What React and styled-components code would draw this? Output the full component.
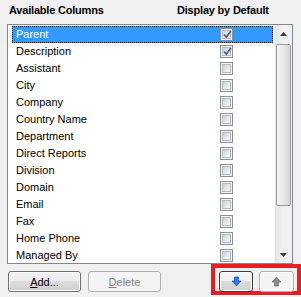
import React from "react";
import styled, { createGlobalStyle } from "styled-components";

const GlobalStyle = createGlobalStyle`
  html, body {
    margin: 0;
    padding: 0;
    background: #f0f0f0;
  }
  body {
    font-family: Tahoma, "Liberation Sans", Arial, sans-serif;
    font-size: 11px;
    color: #000;
  }
`;

const Page = styled.div`
  width: 301px;
  height: 297px;
  overflow: hidden;
  display: flex;
  flex-direction: column;
`;

const HeaderRow = styled.div`
  height: 24px;
  display: grid;
  grid-template-columns: 168px 1fr;
  align-items: center;
  padding-left: 9px;
  font-weight: bold;
  font-size: 11px;
  letter-spacing: -0.2px;
  box-sizing: border-box;
  padding-bottom: 4px;
`;

const ListBox = styled.div`
  margin-left: 7px;
  width: 286px;
  height: 240px;
  box-sizing: border-box;
  border: 1px solid #828790;
  background: #fff;
  display: flex;
`;

const Rows = styled.div`
  flex: 1;
  padding: 1px 1px 0 4px;
  overflow: hidden;
`;

const Row = styled.div`
  height: 17px;
  display: grid;
  grid-template-columns: 208px 13px 1fr;
  align-items: center;
  box-sizing: border-box;
  padding-left: 4px;
  background: ${(p) => (p.$selected ? "#3399ff" : "transparent")};
  color: ${(p) => (p.$selected ? "#fff" : "#000")};
  outline: ${(p) => (p.$selected ? "1px dotted #000" : "none")};
  outline-offset: -1px;
`;

const Label = styled.span`
  white-space: nowrap;
  line-height: 17px;
`;

const Check = styled.span`
  width: 13px;
  height: 13px;
  box-sizing: border-box;
  border: 1px solid #8e8f8f;
  background: #f4f4f4;
  display: flex;
  align-items: center;
  justify-content: center;
  margin-left: -4px;

  &::before {
    content: "";
    position: absolute;
  }
`;

const CheckInner = styled.span`
  width: 9px;
  height: 9px;
  box-sizing: border-box;
  background: linear-gradient(135deg, #cbcfd5 0%, #e6e8eb 55%, #f7f7f7 100%);
  border: 1px solid #b7bcc2;
  display: flex;
  align-items: center;
  justify-content: center;
  position: relative;

  svg {
    position: absolute;
    left: -1px;
    top: -2px;
  }
`;

const ScrollBar = styled.div`
  width: 17px;
  display: flex;
  flex-direction: column;
  background: linear-gradient(90deg, #e3e3e3 0%, #f0f0f0 40%, #f0f0f0 100%);
  border-left: 1px solid #fff;
`;

const ScrollArrow = styled.div`
  height: 17px;
  display: flex;
  align-items: center;
  justify-content: center;
`;

const Thumb = styled.div`
  margin: 2px 1px 0 1px;
  height: 162px;
  box-sizing: border-box;
  border: 1px solid #9a9a9a;
  border-radius: 2px;
  background: linear-gradient(90deg, #f3f3f3 0%, #e8e8e8 50%, #d6d6d6 100%);
`;

const Track = styled.div`
  flex: 1;
`;

const BottomBar = styled.div`
  display: flex;
  align-items: flex-start;
  padding-left: 8px;
`;

const Button = styled.button`
  margin-top: 7px;
  width: ${(p) => p.$w || 73}px;
  height: 21px;
  box-sizing: border-box;
  border-radius: 3px;
  padding: 0;
  font-family: Tahoma, "Liberation Sans", Arial, sans-serif;
  font-size: 11px;
  border: 1px solid ${(p) => (p.disabled ? "#adb2b5" : "#707070")};
  color: ${(p) => (p.disabled ? "#838383" : "#000")};
  background: ${(p) =>
    p.disabled
      ? "#f4f4f4"
      : "linear-gradient(180deg, #f2f2f2 0%, #ebebeb 50%, #dddddd 50%, #cfcfcf 100%)"};
  box-shadow: inset 0 0 0 1px ${(p) => (p.disabled ? "#f4f4f4" : "#fcfcfc")};
  margin-left: ${(p) => p.$ml || 0}px;
  display: flex;
  align-items: center;
  justify-content: center;

  u {
    text-decoration: underline;
  }
`;

const HighlightGroup = styled.div`
  margin-left: auto;
  border: 4px solid #ed1c24;
  padding: 3px 3px 0 4px;
  display: flex;
  gap: 6px;
  height: 30px;
  box-sizing: border-box;
  width: 90px;
  height: 31px;
`;

const IconButton = styled.button`
  width: ${(p) => p.$w}px;
  height: 21px;
  box-sizing: border-box;
  border-radius: 3px;
  padding: 0;
  display: flex;
  align-items: center;
  justify-content: center;
  border: 1px solid ${(p) => (p.$active ? "#3c3c3c" : "#adb2b5")};
  background: ${(p) =>
    p.$active
      ? "linear-gradient(180deg, #f6f6f6 0%, #eeeeee 50%, #dcdcdc 50%, #d2d2d2 100%)"
      : "#f4f4f4"};
  box-shadow: inset 0 0 0 1px ${(p) => (p.$active ? "#ffffff" : "#fbfbfb")};
`;

const items = [
  ["Parent", true],
  ["Description", true],
  ["Assistant", false],
  ["City", false],
  ["Company", false],
  ["Country Name", false],
  ["Department", false],
  ["Direct Reports", false],
  ["Division", false],
  ["Domain", false],
  ["Email", false],
  ["Fax", false],
  ["Home Phone", false],
  ["Managed By", false],
];

const CheckBox = ({ checked }) => (
  <Check>
    <CheckInner>
      {checked && (
        <svg width="11" height="11" viewBox="0 0 11 11">
          <path
            d="M2 5.5 L4.3 8 L9 2"
            fill="none"
            stroke="#4a5f9c"
            strokeWidth="1.8"
          />
        </svg>
      )}
    </CheckInner>
  </Check>
);

const BlockArrow = ({ down, color, dark }) => (
  <svg width="11" height="11" viewBox="0 0 11 11">
    <path
      d={
        down
          ? "M3.5 1 H7.5 V5 H10 L5.5 10 L1 5 H3.5 Z"
          : "M3.5 10 H7.5 V6 H10 L5.5 1 L1 6 H3.5 Z"
      }
      fill={color}
      stroke={dark}
      strokeWidth="0.7"
    />
  </svg>
);

export default function App() {
  return (
    <Page>
      <GlobalStyle />
      <HeaderRow>
        <span>Available Columns</span>
        <span>Display by Default</span>
      </HeaderRow>
      <ListBox>
        <Rows>
          {items.map(([name, checked], i) => (
            <Row key={name} $selected={i === 0}>
              <Label>{name}</Label>
              <CheckBox checked={checked} />
              <span />
            </Row>
          ))}
        </Rows>
        <ScrollBar>
          <ScrollArrow>
            <svg width="7" height="4" viewBox="0 0 7 4">
              <path d="M3.5 0 L7 4 H0 Z" fill="#3c3c3c" />
            </svg>
          </ScrollArrow>
          <Thumb />
          <Track />
          <ScrollArrow>
            <svg width="7" height="4" viewBox="0 0 7 4">
              <path d="M0 0 H7 L3.5 4 Z" fill="#3c3c3c" />
            </svg>
          </ScrollArrow>
        </ScrollBar>
      </ListBox>
      <BottomBar>
        <Button>
          <span>
            <u>A</u>dd...
          </span>
        </Button>
        <Button disabled $ml={7}>
          <span>
            <u>D</u>elete
          </span>
        </Button>
        <HighlightGroup>
          <IconButton $w={34} $active>
            <BlockArrow down color="#2f7be5" dark="#1a4fa8" />
          </IconButton>
          <IconButton $w={35}>
            <BlockArrow color="#8a8a8a" dark="#6e6e6e" />
          </IconButton>
        </HighlightGroup>
      </BottomBar>
    </Page>
  );
}
